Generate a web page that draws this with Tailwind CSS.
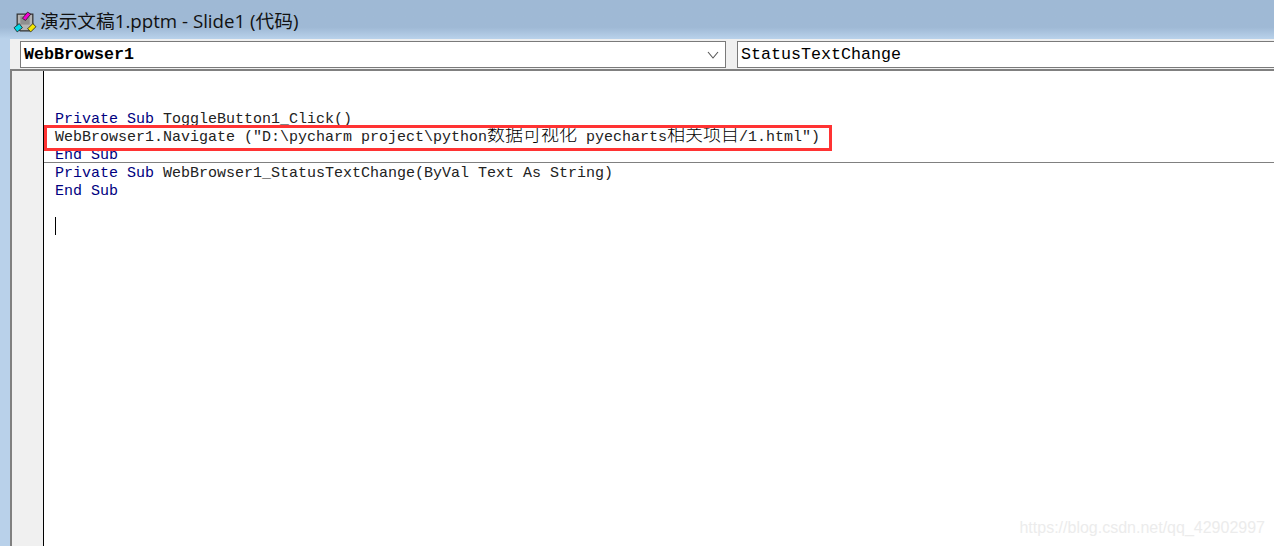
<!DOCTYPE html>
<html lang="en">
<head>
    <meta charset="UTF-8">
    <title>演示文稿1.pptm - Slide1 (代码)</title>
    <script src="https://cdn.jsdelivr.net/npm/@tailwindcss/browser@4"></script>
</head>
<body class="w-[1274px] h-[546px] overflow-hidden bg-[#b9d1ea]">
    <!-- Title bar -->
    <div class="h-[39px] flex items-center gap-[3px] pl-[13px] pt-[4px] bg-gradient-to-b from-[#9fb9d5] from-70% to-[#b9d2eb]">
        <svg class="w-[24px] h-[24px] shrink-0" viewBox="0 0 23 23">
            <path d="M4 4h15v13l-3 3H7l-3-3z" fill="#b5b5b5" stroke="#333" stroke-width="1.2"/>
            <path d="M7 6h9v8H7z" fill="#8f8f8f"/>
            <path d="M9 8l5-6 3 2-5 6z" fill="#f000d0" stroke="#222" stroke-width=".8"/>
            <path d="M1 17l5-4 3 4-5 4z" fill="#00d8e8" stroke="#222" stroke-width=".8"/>
            <path d="M14 18l5-5 3 3-5 5z" fill="#f6e800" stroke="#222" stroke-width=".8"/>
        </svg>
        <span class="text-[18.7px] text-[#111] font-['Open_Sans','Noto_Sans_CJK_SC',sans-serif]">演示文稿1.pptm - Slide1 (代码)</span>
    </div>
    <div class="flex h-[507px]">
        <!-- Window edge -->
        <div class="w-[10px] shrink-0"></div>
        <div class="flex-1 flex flex-col bg-white">
            <!-- Object and procedure boxes -->
            <div class="h-[32px] shrink-0 flex gap-[11px] pl-[10px] pt-[2px] bg-[#f0f0f0] border-b-[2px] border-[#808080] font-['Liberation_Mono',monospace] text-[16.67px] text-black">
                <div class="w-[706px] h-[27px] flex items-center justify-between pl-[3px] pr-[5px] bg-white border border-[#7a7a7a]">
                    <span class="font-bold">WebBrowser1</span>
                    <svg class="w-[14px] h-[14px]" viewBox="0 0 14 14"><path d="M2 4l5 6 5-6" fill="none" stroke="#555" stroke-width="1.1"/></svg>
                </div>
                <div class="flex-1 h-[27px] flex items-center pl-[3px] bg-white border border-r-0 border-[#7a7a7a]">StatusTextChange</div>
            </div>
            <!-- Code pane -->
            <div class="flex-1 min-h-0 flex">
                <div class="w-[34px] shrink-0 bg-[#f0f0f0] border-l-[2px] border-r border-l-[#808080] border-r-black"></div>
                <div class="relative flex-1 pt-[40px] font-['Liberation_Mono','Noto_Sans_CJK_SC',monospace] text-[15px] leading-[18px] whitespace-nowrap">
                    <div class="h-[18px] pl-[11px] text-[#000080]">Private Sub <span class="text-[#222]">ToggleButton1_Click()</span></div>
                    <div class="h-[18px] pl-[11px] text-[#222]">WebBrowser1.Navigate ("D:\pycharm project\python<span class="text-[18px] leading-[0] text-black font-['Noto_Sans_CJK_SC',sans-serif] font-light">数据可视化</span> pyecharts<span class="text-[18px] leading-[0] text-black font-['Noto_Sans_CJK_SC',sans-serif] font-light">相关项目</span>/1.html")</div>
                    <div class="h-[18px] pl-[11px] text-[#000080]">End Sub</div>
                    <div class="h-[18px] pl-[11px] text-[#000080]">Private Sub <span class="text-[#222]">WebBrowser1_StatusTextChange(ByVal Text As String)</span></div>
                    <div class="h-[18px] pl-[11px] text-[#000080]">End Sub</div>
                    <div class="ml-[11px] mt-[16px] w-px h-[18px] bg-black"></div>
                    <!-- Procedure separator -->
                    <div class="absolute left-0 right-0 top-[91px] h-px bg-[#808080]"></div>
                    <!-- Red annotation -->
                    <div class="absolute left-0 top-[54px] w-[788px] h-[26px] border-[3px] border-[#f33]"></div>
                    <!-- Watermark -->
                    <div class="absolute right-[9px] bottom-[9px] font-['Liberation_Sans',sans-serif] text-[16px] leading-[18px] text-[#ececec]">https://blog.csdn.net/qq_42902997</div>
                </div>
            </div>
        </div>
    </div>
</body>
</html>
